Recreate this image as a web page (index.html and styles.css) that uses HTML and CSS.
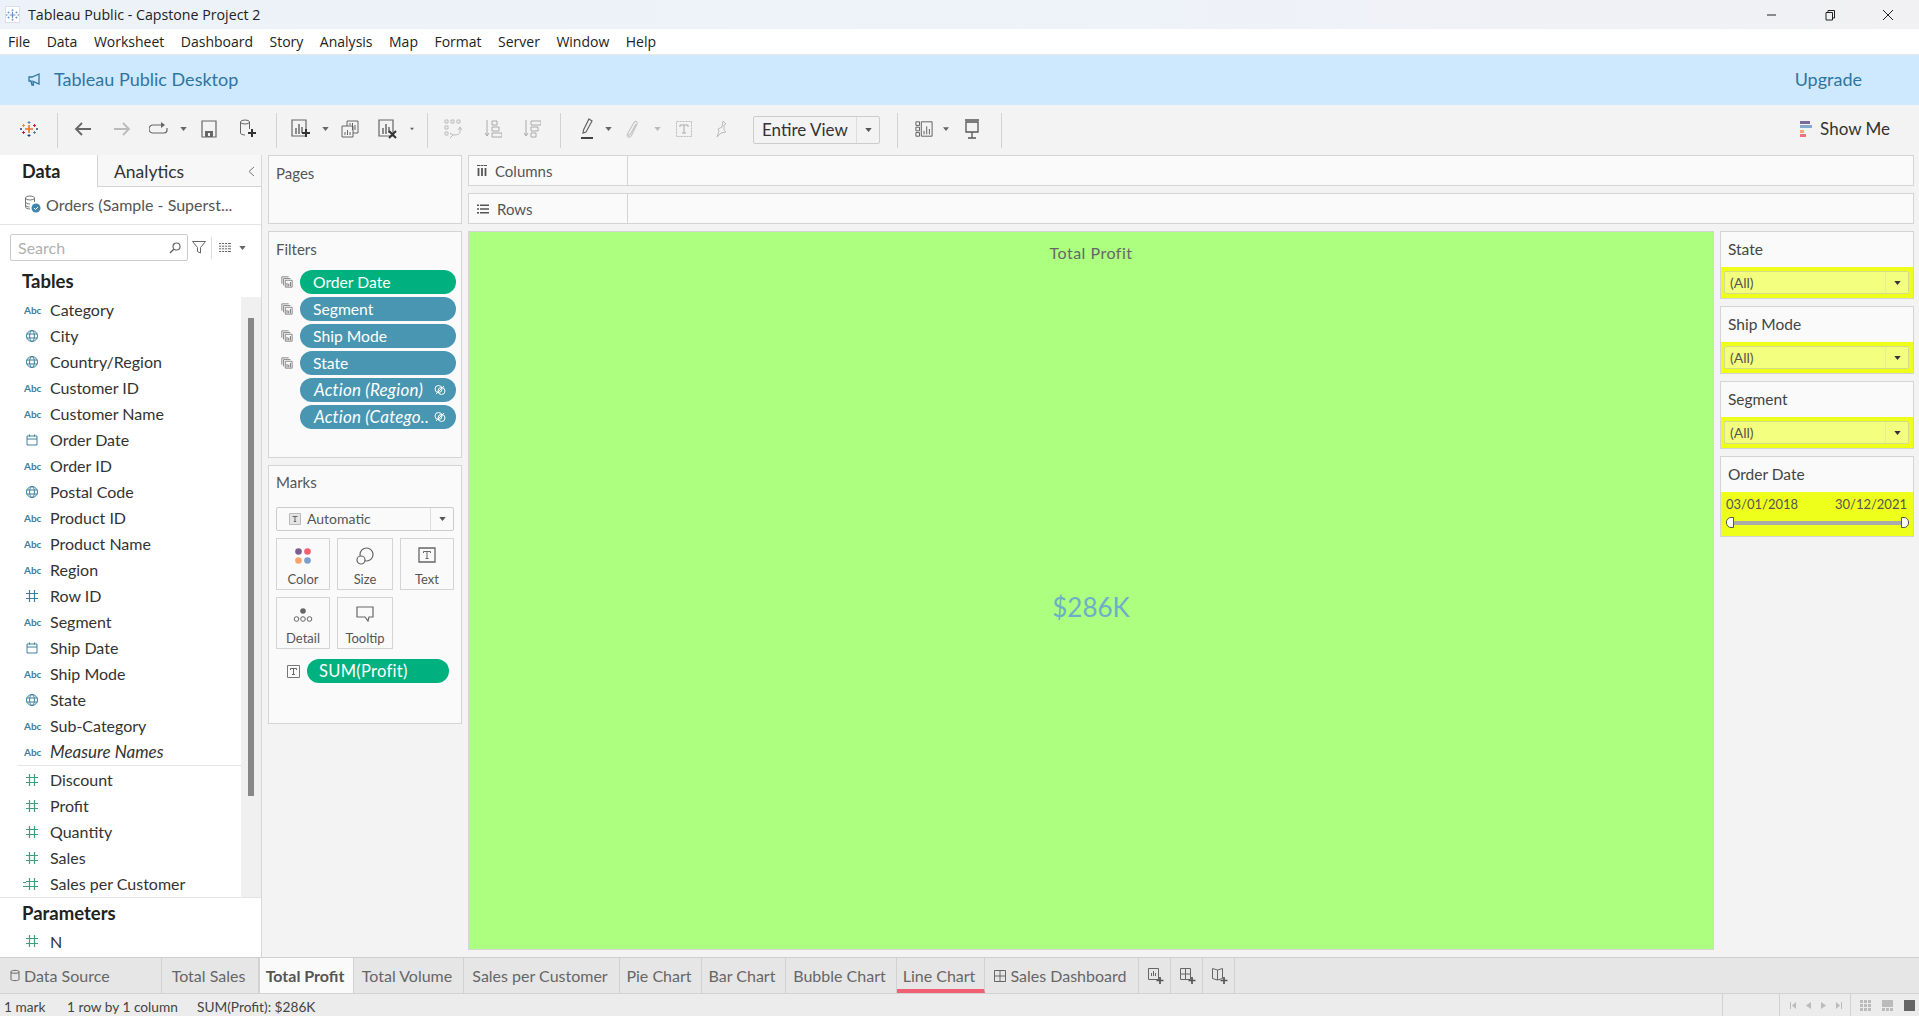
FILE: index.html
```html
<!DOCTYPE html>
<html lang="en">
<head>
    <meta charset="UTF-8">
    <meta name="viewport" content="width=device-width, initial-scale=1.0">
    <title>Tableau Public - Capstone Project 2</title>
    <link rel="stylesheet" href="styles.css">
</head>
<body>
    <svg class="sprites" xmlns="http://www.w3.org/2000/svg">
        <symbol id="hash" viewBox="0 0 14 14"><path d="M4.500 1v12M9.500 1v12M1 4.500h12M1 9.500h12" fill="none" stroke="currentColor" stroke-width="1.200"/></symbol>
        <symbol id="globe" viewBox="0 0 14 14"><g fill="none" stroke="currentColor"><circle cx="7" cy="7" r="5.500"/><ellipse cx="7" cy="7" rx="2.400" ry="5.500"/><path d="M1.500 5h11M1.500 9h11"/></g></symbol>
        <symbol id="cal" viewBox="0 0 14 14"><path d="M2 3h10v9H2zM2 6h10M4.500 1.500v2M9.500 1.500v2" fill="none" stroke="currentColor"/></symbol>
        <symbol id="stack" viewBox="0 0 14 14"><g fill="none" stroke="#777"><path d="M1 9V1h8"/><path d="M3 11V3h8"/><path d="M5 5h8v8H5z"/></g><path d="M7 8v4M9 9v3M11 7v5" stroke="#666"/></symbol>
        <symbol id="link" viewBox="0 0 12 12"><g fill="none" stroke="#fff"><circle cx="4.500" cy="5" r="3.500"/><circle cx="7.500" cy="7" r="3.500"/><path d="M2 10 10 2"/></g></symbol>
        <symbol id="caret" viewBox="0 0 8 5"><path d="M0 0h8L4 5z" fill="currentColor"/></symbol>
        <symbol id="snow" viewBox="0 0 18 18"><path d="M9 5v8M5 9h8" stroke="currentColor" stroke-width="1.600"/><path d="M9 1v3M7.500 2.500h3M9 14v3M7.500 15.500h3M3.500 4v3M2 5.500h3M14.500 4v3M13 5.500h3M3.500 11v3M2 12.500h3M14.500 11v3M13 12.500h3M1 8v2M0 9h2M17 8v2M16 9h2" stroke="currentColor"/></symbol>
    </svg>

    <header class="titlebar">
        <span class="app-icon"><svg class="ico-14"><use href="#snow"/></svg></span>
        <span class="title-text">Tableau Public - Capstone Project 2</span>
        <div class="win-btns">
            <svg width="12" height="12" viewBox="0 0 12 12"><path d="M1 6h9" stroke="#222"/></svg>
            <svg width="12" height="12" viewBox="0 0 12 12"><path d="M2 3.500h6.500V11H2zM4 3.500V1.500h6.500V9H8.500" fill="none" stroke="#222"/></svg>
            <svg width="12" height="12" viewBox="0 0 12 12"><path d="M1 1l10 10M11 1 1 11" stroke="#222"/></svg>
        </div>
    </header>

    <nav class="menubar">
        <span>File</span><span>Data</span><span>Worksheet</span><span>Dashboard</span><span>Story</span><span>Analysis</span><span>Map</span><span>Format</span><span>Server</span><span>Window</span><span>Help</span>
    </nav>

    <div class="banner">
        <svg class="banner-icon" width="14" height="14" viewBox="0 0 14 14"><path d="M12 2 5 5H2v4h2l1 4h1.500L6 9.300 12 12zM12 2v10" fill="none" stroke="#2f769f" stroke-width="1.300"/></svg>
        <span class="banner-text">Tableau Public Desktop</span>
        <span class="upgrade">Upgrade</span>
    </div>

    <div class="toolbar">
        <span class="tool">
            <svg width="18" height="18" viewBox="0 0 18 18">
                <path d="M9 5v8M5 9h8" stroke="#e8762d" stroke-width="1.600"/>
                <path d="M9 1v3M7.500 2.500h3" stroke="#5b879b"/>
                <path d="M9 14v3M7.500 15.500h3" stroke="#1f447b"/>
                <path d="M3.500 4v3M2 5.500h3" stroke="#eb912b"/>
                <path d="M14.500 4v3M13 5.500h3" stroke="#c72037"/>
                <path d="M3.500 11v3M2 12.500h3" stroke="#c72037"/>
                <path d="M14.500 11v3M13 12.500h3" stroke="#5b879b"/>
                <path d="M1 8v2M0 9h2" stroke="#1f447b"/>
                <path d="M17 8v2M16 9h2" stroke="#1f447b"/>
            </svg>
        </span>
        <i class="sep"></i>
        <span class="tool"><svg width="18" height="16" viewBox="0 0 18 16"><path d="M17 8H2M8 2 2 8l6 6" fill="none" stroke="#666" stroke-width="1.800"/></svg></span>
        <span class="tool"><svg width="18" height="16" viewBox="0 0 18 16"><path d="M1 8h15M10 2l6 6-6 6" fill="none" stroke="#bbb" stroke-width="1.800"/></svg></span>
        <span class="tool"><svg width="20" height="14" viewBox="0 0 20 14"><path d="M13 3H4a3 3 0 0 0 0 8h11a3 3 0 0 0 3-3V6" fill="none" stroke="#666" stroke-width="1.200"/><path d="M12 0l4 3-4 3z" fill="#666"/></svg></span>
        <span class="tool caret"><svg width="7" height="4"><use href="#caret"/></svg></span>
        <span class="tool"><svg width="16" height="18" viewBox="0 0 16 18"><path d="M1 1h14v16H1z" fill="none" stroke="#666" stroke-width="1.200"/><path d="M4 11h8v6H4z" fill="#666"/><path d="M7 13h2v3H7z" fill="#f3f3f3"/></svg></span>
        <span class="tool"><svg width="18" height="20" viewBox="0 0 18 20"><g fill="none" stroke="#666"><ellipse cx="6" cy="3" rx="4.500" ry="2"/><path d="M1.500 3v11c0 1 2 2 4.500 2M10.500 3v7"/></g><path d="M13 10v8M9 14h8" stroke="#333" stroke-width="2"/></svg></span>
        <i class="sep"></i>
        <span class="tool"><svg width="20" height="20" viewBox="0 0 20 20"><path d="M1 1h14v16H1z" fill="none" stroke="#666" stroke-width="1.200"/><path d="M5 9v6M8 5v10M11 8v6" stroke="#555" stroke-width="1.300"/><path d="M15 10v8M11 14h8" stroke="#333" stroke-width="2"/></svg></span>
        <span class="tool caret"><svg width="7" height="4"><use href="#caret"/></svg></span>
        <span class="tool"><svg width="18" height="18" viewBox="0 0 18 18"><g fill="none" stroke="#666"><path d="M6 1h11v12H6z"/><path d="M1 6h11v11H1z" fill="#f3f3f3"/><path d="M9 5V3M11.500 10V3M14 10V5M4 15v-3M6.500 15v-5M9 15v-3"/></g></svg></span>
        <span class="tool"><svg width="20" height="20" viewBox="0 0 20 20"><path d="M1 1h14v16H1z" fill="none" stroke="#666" stroke-width="1.200"/><path d="M5 9v6M8 5v10M11 8v6" stroke="#555" stroke-width="1.300"/><path d="M11 12l7 7M18 12l-7 7" stroke="#333" stroke-width="2"/></svg></span>
        <span class="tool caret"><svg width="7" height="4"><use href="#caret"/></svg></span>
        <i class="sep"></i>
        <span class="tool"><svg width="18" height="20" viewBox="0 0 18 20"><g fill="none" stroke="#bbb"><path d="M1 1h3v3H1zM7 1h3v3H7zM13 1h3v3h-3zM1 7h3v3H1zM1 13h3v3H1z"/><path d="M16 8v5c0 2-2 3-7 3M6 14l3 2-3 3M14 11l2-3 2 3"/></g></svg></span>
        <span class="tool"><svg width="18" height="20" viewBox="0 0 18 20"><g fill="none" stroke="#aaa"><path d="M8 2h5v4H8zM8 8h7v4H8zM8 14h10v4H8z"/><path d="M3 1v16M1 14l2 3 2-3"/></g></svg></span>
        <span class="tool"><svg width="18" height="20" viewBox="0 0 18 20"><g fill="none" stroke="#aaa"><path d="M8 2h10v4H8zM8 8h7v4H8zM8 14h5v4H8z"/><path d="M3 1v16M1 14l2 3 2-3"/></g></svg></span>
        <i class="sep"></i>
        <span class="tool"><svg width="14" height="22" viewBox="0 0 14 22"><path d="M9 1l3 2-6 11-3 1 .5-3z" fill="none" stroke="#666" stroke-width="1.200"/><path d="M1 19h12v2H1z" fill="#444"/></svg></span>
        <span class="tool caret"><svg width="7" height="4"><use href="#caret"/></svg></span>
        <span class="tool"><svg width="14" height="20" viewBox="0 0 14 20"><path d="M10 5 4.500 15c-1 2-3.500 1-2.500-1L8 3.500c1.200-2 4-1 3 1.500L5.500 16.500c-1.800 3-5.500 1.500-4-1.500L6 7" fill="none" stroke="#c4c4c4" stroke-width="1.100"/></svg></span>
        <span class="tool caret light"><svg width="7" height="4"><use href="#caret"/></svg></span>
        <span class="tool"><svg width="16" height="16" viewBox="0 0 16 16"><path d="M.5.500h15v15H.5z" fill="none" stroke="#bbb" stroke-dasharray="2 1"/><path d="M4 6V4h8v2M8 4v8M6 12h4" fill="none" stroke="#aaa"/></svg></span>
        <span class="tool"><svg width="12" height="18" viewBox="0 0 12 18"><path d="M8 1l3 3-2 1 0 5 2 2-5 1-4 4 2-6-1-2 4-2z" fill="none" stroke="#bbb"/></svg></span>
        <div class="fit-box"><span class="fit-label">Entire View</span><span class="fit-arrow"><svg width="7" height="4"><use href="#caret"/></svg></span></div>
        <i class="sep"></i>
        <span class="tool"><svg width="20" height="18" viewBox="0 0 20 18"><g fill="none" stroke="#555"><path d="M1 1h4v4H1zM1 7h4v4H1zM1 13h4v4H1zM7 1h12v16H7z"/><path d="M10 15v-4M13 15V6M16 15V9"/></g></svg></span>
        <span class="tool caret"><svg width="6" height="4"><use href="#caret"/></svg></span>
        <span class="tool"><svg width="16" height="20" viewBox="0 0 16 20"><path d="M1 1h14M2 3h12v10H2zM8 13v6M4 19h8" fill="none" stroke="#555" stroke-width="1.300"/></svg></span>
        <i class="sep light-sep"></i>
        <span></span>
        <div class="show-me">
            <svg width="12" height="16" viewBox="0 0 12 16"><path d="M0 0h10v3H0z" fill="#7b6a96"/><path d="M0 4h12v3H0z" fill="#86a9cb"/><path d="M0 9h4v3H0z" fill="#f5a777"/><path d="M0 13h6v3H0z" fill="#f0707e"/></svg>
            <span>Show Me</span>
        </div>
    </div>

    <main class="workspace">
        <aside class="data-pane">
            <div class="pane-tabs">
                <span class="tab-data">Data</span>
                <div class="tab-analytics">
                    <span>Analytics</span>
                    <svg width="7" height="11" viewBox="0 0 7 11"><path d="M6 1 1 5.500 6 10" fill="none" stroke="#777"/></svg>
                </div>
            </div>
            <div class="source-row">
                <svg width="17" height="19" viewBox="0 0 17 19"><g fill="none" stroke="#777"><ellipse cx="6" cy="3" rx="4.500" ry="2"/><path d="M1.500 3v9c0 1 2 2 4.500 2M10.500 3v4M1.500 7c0 1 2 2 4.500 2M1.500 10c0 1 2 2 4 2"/></g><circle cx="12" cy="13" r="4.500" fill="#3f86aa"/><path d="M10 13l1.500 1.500L14 12" fill="none" stroke="#fff"/></svg>
                <span>Orders (Sample - Superst...</span>
            </div>
            <div class="search-row">
                <div class="search-box">
                    <span>Search</span>
                    <svg width="12" height="12" viewBox="0 0 12 12"><circle cx="7.500" cy="4.500" r="3.500" fill="none" stroke="#666" stroke-width="1.200"/><path d="M5 7l-4 4" stroke="#666" stroke-width="1.400"/></svg>
                </div>
                <svg class="filter-ico" width="14" height="13" viewBox="0 0 14 13"><path d="M.5.500h13L8.500 6.500V12l-3-1.500v-4z" fill="none" stroke="#666"/></svg>
                <i class="search-sep"></i>
                <svg class="grid-ico" width="12" height="9" viewBox="0 0 12 9"><path d="M0 .5h12M0 3.200h12M0 5.800h12M0 8.500h12" stroke="#666"/><path d="M2.500 0v9M5.500 0v9M8.500 0v9" stroke="#f3f3f3"/></svg>
                <svg class="grid-caret" width="7" height="4"><use href="#caret"/></svg>
            </div>
            <h2 class="pane-head">Tables</h2>
            <div class="field-area">
                <div class="field-list">
                    <ul class="fields">
                        <li><span class="abc">Abc</span>Category</li>
                        <li><span class="f-ico"><svg class="ico-14"><use href="#globe"/></svg></span>City</li>
                        <li><span class="f-ico"><svg class="ico-14"><use href="#globe"/></svg></span>Country/Region</li>
                        <li><span class="abc">Abc</span>Customer ID</li>
                        <li><span class="abc">Abc</span>Customer Name</li>
                        <li><span class="f-ico"><svg class="ico-14"><use href="#cal"/></svg></span>Order Date</li>
                        <li><span class="abc">Abc</span>Order ID</li>
                        <li><span class="f-ico"><svg class="ico-14"><use href="#globe"/></svg></span>Postal Code</li>
                        <li><span class="abc">Abc</span>Product ID</li>
                        <li><span class="abc">Abc</span>Product Name</li>
                        <li><span class="abc">Abc</span>Region</li>
                        <li><span class="f-ico"><svg class="ico-14"><use href="#hash"/></svg></span>Row ID</li>
                        <li><span class="abc">Abc</span>Segment</li>
                        <li><span class="f-ico"><svg class="ico-14"><use href="#cal"/></svg></span>Ship Date</li>
                        <li><span class="abc">Abc</span>Ship Mode</li>
                        <li><span class="f-ico"><svg class="ico-14"><use href="#globe"/></svg></span>State</li>
                        <li><span class="abc">Abc</span>Sub-Category</li>
                        <li class="calc"><span class="abc">Abc</span>Measure Names</li>
                    </ul>
                    <ul class="fields measures">
                        <li><span class="f-ico"><svg class="ico-14"><use href="#hash"/></svg></span>Discount</li>
                        <li><span class="f-ico"><svg class="ico-14"><use href="#hash"/></svg></span>Profit</li>
                        <li><span class="f-ico"><svg class="ico-14"><use href="#hash"/></svg></span>Quantity</li>
                        <li><span class="f-ico"><svg class="ico-14"><use href="#hash"/></svg></span>Sales</li>
                        <li><span class="f-ico eq"><svg class="ico-14"><use href="#hash"/></svg></span>Sales per Customer</li>
                    </ul>
                </div>
                <div class="scroll-track"><div class="scroll-thumb"></div></div>
            </div>
            <div class="params">
                <h2 class="pane-head">Parameters</h2>
                <ul class="fields measures">
                    <li><span class="f-ico"><svg class="ico-14"><use href="#hash"/></svg></span>N</li>
                </ul>
            </div>
        </aside>

        <section class="side-cards">
            <div class="card pages-card"><h3>Pages</h3></div>
            <div class="card filters-card">
                <h3>Filters</h3>
                <div class="pill-row"><svg class="ico-12"><use href="#stack"/></svg><span class="pill green">Order Date</span></div>
                <div class="pill-row"><svg class="ico-12"><use href="#stack"/></svg><span class="pill">Segment</span></div>
                <div class="pill-row"><svg class="ico-12"><use href="#stack"/></svg><span class="pill">Ship Mode</span></div>
                <div class="pill-row"><svg class="ico-12"><use href="#stack"/></svg><span class="pill">State</span></div>
                <div class="pill-row"><span class="pill action">Action (Region)<svg class="ico-12"><use href="#link"/></svg></span></div>
                <div class="pill-row"><span class="pill action">Action (Catego..<svg class="ico-12"><use href="#link"/></svg></span></div>
            </div>
            <div class="card marks-card">
                <h3>Marks</h3>
                <div class="marks-select">
                    <span class="marks-type">
                        <svg width="12" height="12" viewBox="0 0 12 12"><path d="M.5.500h11v11H.5z" fill="#e4e4e4" stroke="#bbb"/><path d="M3.500 3.500h5M6 3.500v5M4.800 8.500h2.400" fill="none" stroke="#666"/></svg>
                        Automatic
                    </span>
                    <span class="marks-arrow"><svg width="7" height="4"><use href="#caret"/></svg></span>
                </div>
                <div class="marks-grid">
                    <div class="mark-btn">
                        <svg width="18" height="18" viewBox="0 0 18 18"><circle cx="4.500" cy="4.500" r="3.300" fill="#7b5f92"/><circle cx="13.500" cy="4.500" r="3.300" fill="#f1606f"/><circle cx="4.500" cy="13.500" r="3.300" fill="#f6a66d"/><circle cx="13.500" cy="13.500" r="3.300" fill="#7c9fcb"/></svg>
                        <span>Color</span>
                    </div>
                    <div class="mark-btn">
                        <svg width="18" height="18" viewBox="0 0 18 18"><g fill="none" stroke="#666" stroke-width="1.200"><circle cx="10.500" cy="7.500" r="6.500"/><circle cx="5" cy="13" r="4" fill="#fafafa"/></g></svg>
                        <span>Size</span>
                    </div>
                    <div class="mark-btn">
                        <svg width="18" height="16" viewBox="0 0 18 16"><path d="M1 1h16v14H1z" fill="none" stroke="#666" stroke-width="1.300"/><path d="M5.500 6V4.500h7V6M9 4.500v7M7.500 11.500h3" fill="none" stroke="#666"/></svg>
                        <span>Text</span>
                    </div>
                    <div class="mark-btn">
                        <svg width="20" height="18" viewBox="0 0 20 18"><circle cx="10" cy="5" r="2.800" fill="#666"/><g fill="none" stroke="#666"><circle cx="3.500" cy="13" r="2.300"/><circle cx="10" cy="13" r="2.300"/><circle cx="16.500" cy="13" r="2.300"/></g></svg>
                        <span>Detail</span>
                    </div>
                    <div class="mark-btn">
                        <svg width="18" height="16" viewBox="0 0 18 16"><path d="M1 1h16v10h-4l-1 4-3-4H1z" fill="none" stroke="#666" stroke-width="1.200"/></svg>
                        <span>Tooltip</span>
                    </div>
                </div>
                <div class="marks-field">
                    <svg width="13" height="13" viewBox="0 0 13 13"><path d="M.5.500h12v12H.5z" fill="none" stroke="#777"/><path d="M3.500 5V3.500h6V5M6.500 3.500v6M5 9.500h3" fill="none" stroke="#666"/></svg>
                    <span class="pill green sum">SUM(Profit)</span>
                </div>
            </div>
        </section>

        <section class="sheet-area">
            <div class="shelf">
                <div class="shelf-label"><svg width="10" height="11" viewBox="0 0 10 11"><path d="M1.500 3v8M5 3v8M8.500 3v8" stroke="#555" stroke-width="1.800"/><path d="M0 .5h3M3.500.5h3M7 .5h3" stroke="#555"/></svg><span>Columns</span></div>
            </div>
            <div class="shelf">
                <div class="shelf-label"><svg width="12" height="10" viewBox="0 0 12 10"><path d="M3 1.200h9M3 5h9M3 8.800h9" stroke="#555" stroke-width="1.600"/><path d="M0 1.200h2M0 5h2M0 8.800h2" stroke="#555" stroke-width="1.600"/></svg><span>Rows</span></div>
            </div>
            <div class="view-row">
                <div class="viz">
                    <div class="viz-title">Total Profit</div>
                    <div class="viz-value">$286K</div>
                </div>
                <div class="quick-filters">
                    <div class="qf"><div class="qf-title">State</div><div class="qf-band"><div class="qf-select"><span class="qf-val">(All)</span><span class="qf-arrow"><svg width="7" height="4"><use href="#caret"/></svg></span></div></div></div>
                    <div class="qf"><div class="qf-title">Ship Mode</div><div class="qf-band"><div class="qf-select"><span class="qf-val">(All)</span><span class="qf-arrow"><svg width="7" height="4"><use href="#caret"/></svg></span></div></div></div>
                    <div class="qf"><div class="qf-title">Segment</div><div class="qf-band"><div class="qf-select"><span class="qf-val">(All)</span><span class="qf-arrow"><svg width="7" height="4"><use href="#caret"/></svg></span></div></div></div>
                    <div class="qf">
                        <div class="qf-title">Order Date</div>
                        <div class="qf-range">
                            <div class="range-dates"><span>03/01/2018</span><span>30/12/2021</span></div>
                            <div class="range-track">
                                <i class="handle left"></i><i class="handle right"></i>
                            </div>
                        </div>
                    </div>
                </div>
            </div>
        </section>
    </main>

    <div class="tabbar">
        <div class="tab first"><svg width="10" height="13" viewBox="0 0 10 13"><path d="M1 2.500C1 1 9 1 9 2.500v8c0 1.500-8 1.500-8 0zM1 3.500c1 1 7 1 8 0" fill="none" stroke="#666"/></svg>Data Source</div>
        <div class="tab">Total Sales</div>
        <div class="tab active">Total Profit</div>
        <div class="tab">Total Volume</div>
        <div class="tab">Sales per Customer</div>
        <div class="tab">Pie Chart</div>
        <div class="tab">Bar Chart</div>
        <div class="tab">Bubble Chart</div>
        <div class="tab marked">Line Chart</div>
        <div class="tab dash"><svg width="12" height="12" viewBox="0 0 12 12"><path d="M.5.500h11v11H.5zM6 .5v11M.5 6h11" fill="none" stroke="#666"/></svg>Sales Dashboard</div>
        <div class="tab add"><svg width="16" height="16" viewBox="0 0 16 16"><path d="M.5.500h10v11H.5z" fill="none" stroke="#666"/><path d="M3.500 8V5M5.500 8V3M7.500 8V5" stroke="#666"/><path d="M12 9v7M8.500 12.500h7" stroke="#555" stroke-width="1.700"/></svg></div>
        <div class="tab add"><svg width="16" height="16" viewBox="0 0 16 16"><path d="M.5.500h10v11H.5zM5.500.5v11M.5 6h10" fill="none" stroke="#666"/><path d="M12 9v7M8.500 12.500h7" stroke="#555" stroke-width="1.700"/></svg></div>
        <div class="tab add"><svg width="16" height="16" viewBox="0 0 16 16"><path d="M.5.500l5 1.500 5-1.500v10l-5 1.500-5-1.500zM5.500 2v10" fill="none" stroke="#666"/><path d="M12 9v7M8.500 12.500h7" stroke="#555" stroke-width="1.700"/></svg></div>
        <div class="tab-rest"></div>
    </div>

    <footer class="statusbar">
        <span class="st-mark">1 mark</span>
        <span class="st-rows">1 row by 1 column</span>
        <span class="st-sum">SUM(Profit): $286K</span>
        <span class="st-cell st-blank"></span>
        <span class="st-cell st-pager">
            <svg width="6" height="7" viewBox="0 0 6 7"><path d="M0 0h1v7H0zM6 0v7L2 3.500z" fill="#bbb"/></svg>
            <svg width="5" height="7" viewBox="0 0 5 7"><path d="M5 0v7L0 3.500z" fill="#bbb"/></svg>
            <svg width="5" height="7" viewBox="0 0 5 7"><path d="M0 0v7l5-3.500z" fill="#bbb"/></svg>
            <svg width="6" height="7" viewBox="0 0 6 7"><path d="M5 0h1v7H5zM0 0v7l4-3.500z" fill="#bbb"/></svg>
        </span>
        <span class="st-cell st-views">
            <svg width="11" height="11" viewBox="0 0 11 11"><path d="M0 0h3v3H0zM4 0h3v3H4zM8 0h3v3H8zM0 4h3v3H0zM4 4h3v3H4zM8 4h3v3H8zM0 8h3v3H0zM4 8h3v3H4zM8 8h3v3H8z" fill="#bbb"/></svg>
            <svg width="11" height="11" viewBox="0 0 11 11"><path d="M0 0h11v7H0zM0 8h3v3H0zM4 8h3v3H4zM8 8h3v3H8z" fill="#bbb"/></svg>
            <svg width="11" height="11" viewBox="0 0 11 11"><path d="M0 0h11v11H0z" fill="#666"/></svg>
        </span>
    </footer>
</body>
</html>
```

FILE: styles.css
```css
* {
    box-sizing: border-box;
}

body {
    margin: 0;
    width: 1919px;
    height: 1016px;
    overflow: hidden;
    display: flex;
    flex-direction: column;
    font-family: "Lato", "Liberation Sans", sans-serif;
    font-size: 16px;
    color: #333;
    background-color: #f3f3f3;
}

.sprites {
    display: none;
}

.ico-14 {
    width: 14px;
    height: 14px;
}

.ico-12 {
    width: 12px;
    height: 12px;
    flex: none;
}

/* title + menu */
.titlebar {
    height: 29px;
    flex: none;
    display: flex;
    align-items: center;
    padding-left: 5px;
    font-family: "Open Sans", sans-serif;
    font-size: 14.200px;
    color: #222;
    background: linear-gradient(90deg, #edf2f9, #eef2f9 60%, #f1f1f3);
}

.app-icon {
    width: 15px;
    height: 17px;
    display: flex;
    align-items: center;
    justify-content: center;
    color: #5f8fc0;
    background-color: #fff;
    border: 1px solid #dde;
}

.title-text {
    margin-left: 8px;
}

.win-btns {
    margin-left: auto;
    display: flex;
    gap: 46px;
    padding-right: 25px;
}

.menubar {
    height: 26px;
    flex: none;
    display: flex;
    align-items: center;
    gap: 16.500px;
    padding-left: 8px;
    font-family: "Open Sans", sans-serif;
    font-size: 14px;
    color: #222;
    background-color: #fff;
    border-bottom: 1px solid #e6e6e6;
}

.banner {
    height: 50px;
    flex: none;
    display: flex;
    align-items: center;
    padding: 0 57px 2px 27px;
    font-size: 18px;
    color: #2f769f;
    background-color: #cee8fe;
}

.banner-text {
    margin-left: 13px;
}

.upgrade {
    margin-left: auto;
}

/* toolbar */
.toolbar {
    height: 50px;
    flex: none;
    display: grid;
    grid-template-columns: 57px 5px 42px 36px 38px 10px 42px 36px 20px 30px 18px 32px 44px 4px 26px 26px 54px 24px 32px 22px 20px 30px 18px 36px 38px 140px 35px 18px 26px 26px 32px 1fr auto;
    align-items: center;
    background-color: #f3f3f3;
}

.tool {
    display: flex;
    align-items: center;
    justify-content: center;
    min-width: 0;
    padding-bottom: 2px;
}

.tool.caret {
    color: #666;
}

.tool.caret.light {
    color: #bbb;
}

.sep {
    display: block;
    width: 1px;
    height: 35px;
    background-color: #d2d2d2;
    justify-self: center;
}

.sep:nth-child(2) {
    justify-self: start;
}

.fit-box {
    justify-self: end;
    width: 127px;
    height: 28px;
    display: flex;
    align-items: stretch;
    border: 1px solid #ccc;
    border-radius: 2px;
    font-size: 17px;
    color: #333;
}

.fit-label {
    flex: 1;
    display: flex;
    align-items: center;
    padding: 0 0 1px 8px;
    border-right: 1px solid #ddd;
}

.fit-arrow {
    width: 22px;
    display: flex;
    align-items: center;
    justify-content: center;
    color: #555;
}

.show-me {
    display: flex;
    align-items: center;
    gap: 8px;
    padding: 0 29px 3px 0;
    font-size: 17px;
    color: #333;
}

/* main area */
.workspace {
    flex: 1;
    display: flex;
    min-height: 0;
}

.data-pane {
    width: 262px;
    flex: none;
    background-color: #fff;
    border-right: 1px solid #d8d8d8;
}

.pane-tabs {
    height: 32px;
    display: flex;
}

.tab-data {
    width: 97px;
    padding-left: 22px;
    line-height: 32px;
    font-size: 18px;
    font-weight: 700;
    color: #222;
}

.tab-analytics {
    flex: 1;
    display: flex;
    align-items: center;
    justify-content: space-between;
    padding: 2px 6px 0 16px;
    font-size: 17.500px;
    color: #333;
    background-color: #f7f7f7;
    border-left: 1px solid #d4d4d4;
    border-bottom: 1px solid #d4d4d4;
}

.source-row {
    height: 38px;
    display: flex;
    align-items: center;
    gap: 5px;
    padding: 0 0 2px 24px;
    font-size: 16px;
    color: #555;
    border-bottom: 1px solid #e4e4e4;
}

.search-row {
    height: 41px;
    display: flex;
    align-items: center;
    padding: 4px 0 0 10px;
}

.search-box {
    width: 178px;
    height: 27px;
    display: flex;
    align-items: center;
    justify-content: space-between;
    padding: 0 6px 0 7px;
    font-size: 16px;
    color: #b0b0b0;
    border: 1px solid #ccc;
    border-radius: 2px;
}

.filter-ico {
    margin-left: 4px;
}

.search-sep {
    width: 1px;
    height: 22px;
    margin: 0 7px 0 5px;
    background-color: #ddd;
}

.grid-caret {
    margin-left: 8px;
    color: #666;
}

.pane-head {
    margin: 0;
    height: 30px;
    padding-left: 22px;
    line-height: 30px;
    font-size: 18.500px;
    font-weight: 700;
    color: #222;
}

.field-area {
    display: flex;
    height: 601px;
    margin-top: 1px;
    border-bottom: 1px solid #e4e4e4;
}

.field-list {
    width: 241px;
    padding-top: 1px;
}

.fields {
    list-style: none;
    margin: 0;
    padding: 0;
}

.fields li {
    height: 26px;
    display: flex;
    align-items: center;
    font-size: 16px;
    color: #333;
}

.field-list li {
    padding-bottom: 3px;
}

.fields .calc {
    font-style: italic;
    font-size: 17px;
}

.abc,
.f-ico {
    width: 50px;
    flex: none;
    padding-left: 24px;
    font-size: 10px;
    font-weight: 700;
    font-style: normal;
    color: #3c7f9b;
    display: flex;
    align-items: center;
}

.f-ico {
    padding-left: 25px;
}

.measures {
    margin-left: 18px;
    padding-top: 2px;
    border-top: 1px solid #e4e4e4;
}

.measures li {
    margin-left: -18px;
}

.params .measures {
    border-top: 0;
    padding-top: 0;
}

.measures .f-ico {
    color: #3f9f7d;
}

.field-list .measures {
    margin-top: -1px;
}

.eq {
    position: relative;
}

.eq::before {
    content: "";
    position: absolute;
    left: 23px;
    top: 5px;
    width: 3px;
    height: 3px;
    border-top: 1px solid #3f9f7d;
    border-bottom: 1px solid #3f9f7d;
}

.scroll-track {
    width: 20px;
    padding: 21px 0 0 7px;
    background-color: #f0f0f0;
}

.scroll-thumb {
    width: 6px;
    height: 478px;
    background-color: #888;
}

.side-cards {
    width: 194px;
    flex: none;
    margin-left: 6px;
    display: flex;
    flex-direction: column;
    gap: 7px;
}

.card {
    padding: 0 7px;
    background-color: #fafafa;
    border: 1px solid #d4d4d4;
}

.card h3 {
    margin: 0;
    height: 38px;
    line-height: 34px;
    font-size: 15px;
    font-weight: 400;
    color: #555;
}

.pages-card {
    height: 69px;
}

.filters-card {
    height: 227px;
}

.marks-card {
    height: 259px;
}

.marks-card h3 {
    line-height: 32px;
}

.pill-row {
    height: 24px;
    margin: 0 -2px 3px 0;
    display: flex;
    align-items: center;
    justify-content: flex-end;
    position: relative;
}

.pill-row > .ico-12 {
    position: absolute;
    left: 5px;
    top: 6px;
}

.pill {
    width: 156px;
    height: 24px;
    padding: 0 0 1px 13px;
    display: flex;
    align-items: center;
    font-size: 15.700px;
    color: #fff;
    background-color: #4996b2;
    border-radius: 12px;
}

.pill.green {
    background-color: #00b180;
}

.pill.action {
    justify-content: space-between;
    padding: 0 10px 1px 14px;
    font-size: 17px;
    font-style: italic;
    letter-spacing: .2px;
}

.marks-select {
    height: 24px;
    margin-top: 3px;
    display: flex;
    border: 1px solid #ccc;
    border-radius: 2px;
    font-size: 14px;
    color: #555;
}

.marks-type {
    flex: 1;
    display: flex;
    align-items: center;
    gap: 6px;
    padding: 0 0 1px 12px;
    border-right: 1px solid #ddd;
}

.marks-arrow {
    width: 22px;
    display: flex;
    align-items: center;
    justify-content: center;
    color: #555;
}

.marks-grid {
    margin-top: 7px;
    display: grid;
    grid-template-columns: 54px 56px 54px;
    gap: 7px;
}

.mark-btn {
    height: 52px;
    display: flex;
    flex-direction: column;
    align-items: center;
    justify-content: space-between;
    padding: 8px 0 2px;
    font-size: 13px;
    color: #555;
    border: 1px solid #d4d4d4;
}

.marks-field {
    margin-top: 10px;
    padding-left: 11px;
    display: flex;
    align-items: center;
    gap: 7px;
}

.pill.sum {
    width: 142px;
    padding-left: 12px;
    font-size: 16.500px;
    letter-spacing: .3px;
}

.sheet-area {
    flex: 1;
    min-width: 0;
    margin: 0 5px 0 6px;
    display: flex;
    flex-direction: column;
    gap: 7px;
}

.shelf {
    height: 31px;
    flex: none;
    background-color: #fafafa;
    border: 1px solid #d4d4d4;
}

.shelf-label {
    width: 159px;
    height: 100%;
    display: flex;
    align-items: center;
    gap: 8px;
    padding-left: 8px;
    font-size: 15px;
    color: #555;
    border-right: 1px solid #d4d4d4;
}

.view-row {
    height: 719px;
    flex: none;
    display: flex;
    gap: 6px;
}

.viz {
    flex: 1;
    display: flex;
    flex-direction: column;
    align-items: center;
    padding-top: 11px;
    background-color: #acff7f;
    border: 1px solid #d4d4d4;
}

.viz-title {
    font-size: 16px;
    letter-spacing: .5px;
    color: #666;
}

.viz-value {
    margin-top: 329px;
    font-size: 26px;
    color: #6faec8;
}

.quick-filters {
    width: 194px;
    flex: none;
    display: flex;
    flex-direction: column;
    gap: 7px;
}

.qf {
    background-color: #fafafa;
    border: 1px solid #d4d4d4;
}

.qf-title {
    height: 35px;
    padding-left: 7px;
    line-height: 35px;
    font-size: 15.500px;
    color: #444;
}

.qf-band {
    height: 31px;
    padding: 4px 4px 4px 3px;
    background-color: #edff1b;
}

.qf-select {
    height: 23px;
    display: flex;
    align-items: stretch;
    font-size: 14px;
    color: #555;
    background-color: #f3ff7e;
    border: 1px solid #d4dd8a;
    border-radius: 2px;
}

.qf-val {
    flex: 1;
    padding-left: 5px;
    line-height: 21px;
    border-right: 1px solid #e8f08e;
}

.qf-arrow {
    width: 22px;
    display: flex;
    align-items: center;
    justify-content: center;
    color: #333;
}

.qf-range {
    height: 44px;
    padding: 4px 6px 0 5px;
    background-color: #edff1b;
}

.range-dates {
    display: flex;
    justify-content: space-between;
    font-size: 13px;
    color: #555;
}

.range-track {
    position: relative;
    height: 4px;
    margin: 9px 1px 0 3px;
    background-color: #aaa;
}

.handle {
    position: absolute;
    top: -4px;
    width: 8px;
    height: 11px;
    background-color: #fff;
    border: 1px solid #555;
}

.handle.left {
    left: -3px;
    border-radius: 5px 0 0 5px;
}

.handle.right {
    right: -3px;
    border-radius: 0 5px 5px 0;
}

/* bottom */
.tabbar {
    height: 37px;
    flex: none;
    display: grid;
    grid-template-columns: 162px 97px 95px 110px 156px 82px 84px 111px 88px 154px 32px 32px 32px 1fr;
    font-size: 16px;
    color: #666;
    background-color: #e6e6e6;
    border-top: 1px solid #cfcfcf;
    border-bottom: 1px solid #d2d2d2;
}

.tab {
    display: flex;
    align-items: center;
    justify-content: center;
    gap: 4px;
    padding-right: 3px;
    border-right: 1px solid #d2d2d2;
}

.tab.first {
    justify-content: flex-start;
    padding-left: 10px;
}

.tab.active {
    font-weight: 700;
    color: #555;
    background-color: #fafafa;
    border-left: 1px solid #d2d2d2;
}

.tab.marked {
    padding-top: 3px;
    border-bottom: 4px solid #f15f74;
}

.tab.dash {
    gap: 5px;
}

.tab.add {
    padding: 0 0 0 3px;
}

.statusbar {
    height: 22px;
    flex: none;
    display: flex;
    align-items: center;
    font-size: 13.700px;
    color: #444;
    background-color: #ececec;
}

.st-mark {
    width: 67px;
    padding: 2px 0 0 4px;
}

.st-rows {
    width: 130px;
    padding-top: 2px;
}

.st-sum {
    width: 1525px;
    padding-top: 2px;
}

.st-cell {
    height: 100%;
    display: flex;
    align-items: center;
    border-left: 1px solid #d2d2d2;
}

.st-blank {
    width: 57px;
}

.st-pager {
    width: 71px;
    padding-left: 10px;
    gap: 10px;
}

.st-views {
    flex: 1;
    padding-left: 9px;
    gap: 11px;
}
```
